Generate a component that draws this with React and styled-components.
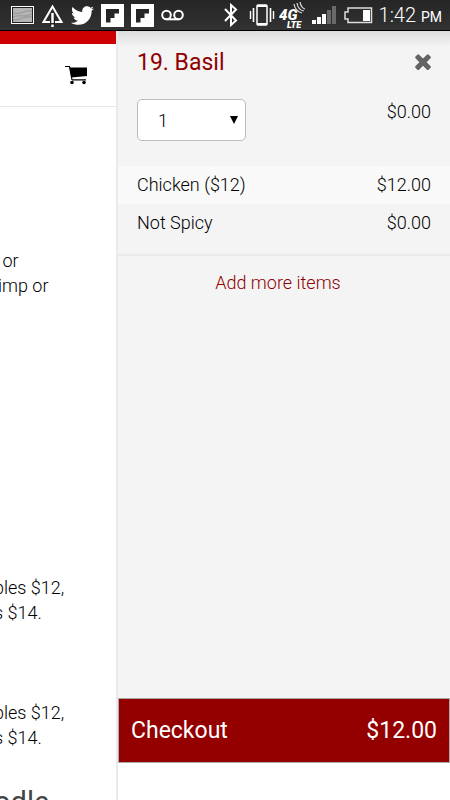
import React, { useState } from 'react'
import styled, { createGlobalStyle } from 'styled-components'
import { FaTwitter } from 'react-icons/fa'

const GlobalStyle = createGlobalStyle`
    * {
        box-sizing: border-box;
    }

    body {
        margin: 0;
        background: #fff;
        color: #000;
        font-family: Roboto, 'Liberation Sans', sans-serif;
        font-size: 18px;
        font-weight: 300;
        line-height: 25px;
    }

    svg {
        display: block;
        flex: none;
    }
`

const Screen = styled.div`
    display: flex;
    flex-direction: column;
    height: 100vh;
    overflow: hidden;
`

const StatusBar = styled.header`
    display: flex;
    flex: none;
    justify-content: space-between;
    align-items: center;
    height: 31px;
    padding: 0 8px 0 11px;
    background: linear-gradient(#262626, #323232);
    border-bottom: 1px solid #000;
    color: #fff;
`

const StatusGroup = styled.div`
    display: flex;
    align-items: center;
    gap: ${(props) => props.$gap}px;
`

const Clock = styled.time`
    padding-top: 3px;
    font-size: 20px;
    white-space: nowrap;
`

const Meridiem = styled.span`
    font-size: 14px;
    font-weight: 400;
`

const Body = styled.div`
    display: flex;
    flex: 1;
    min-height: 0;
`

const Menu = styled.main`
    flex: none;
    width: 26%;
    border-top: 13px solid #cc0000;
    overflow: hidden;
`

const MenuHeader = styled.div`
    display: flex;
    justify-content: flex-end;
    align-items: center;
    height: 63px;
    padding-right: 29px;
    border-bottom: 1px solid #e6e6e6;
`

const CartButton = styled.button`
    padding: 0;
    border: 0;
    background: none;
    color: #000;
    cursor: pointer;
`

const Description = styled.p`
    margin: ${(props) => props.$space}px 0 0 -${(props) => props.$cut}px;
    white-space: pre;
`

const MenuTitle = styled.h2`
    margin: 34px 0 0 -6px;
    color: #444;
    font-size: 29px;
    font-weight: 400;
    line-height: 36px;
`

const Drawer = styled.aside`
    display: flex;
    flex: 1;
    flex-direction: column;
    min-width: 0;
    margin-left: -1px;
    border-left: 2px solid #eaeaea;
    background: linear-gradient(#dcdcdc, #f4f4f4 16px);
`

const DrawerHeader = styled.div`
    display: flex;
    justify-content: space-between;
    align-items: center;
    height: 62px;
    padding: 0 19px;
`

const ItemTitle = styled.h1`
    margin: 0;
    color: #900000;
    font-size: 23px;
    font-weight: 400;
`

const CloseButton = styled.button`
    padding: 0;
    border: 0;
    background: none;
    color: #636363;
    cursor: pointer;
`

const QuantityRow = styled.div`
    display: flex;
    justify-content: space-between;
    align-items: flex-start;
    height: 73px;
    padding: 6px 19px 0;
`

const SelectBox = styled.div`
    position: relative;
    width: 109px;

    svg {
        position: absolute;
        top: 17px;
        right: 8px;
        pointer-events: none;
    }
`

const Select = styled.select`
    width: 100%;
    height: 42px;
    padding: 0 20px;
    border: 1px solid #bbb;
    border-radius: 5px;
    background: #fff;
    color: #000;
    font: inherit;
    appearance: none;
`

const Options = styled.table`
    width: 100%;
    border-collapse: collapse;

    tr:first-child {
        background: #f9f9f9;
    }

    th,
    td {
        height: 38px;
        padding: 0 19px 2px;
        font-weight: 300;
        text-align: left;
    }

    td {
        text-align: right;
    }
`

const AddMore = styled.div`
    margin-top: 12px;
    padding: 14px 12px 0 0;
    border-top: 2px solid #eaeaea;
    text-align: center;

    a {
        color: #900000;
        text-decoration: none;
    }
`

const Footer = styled.footer`
    margin-top: auto;
    padding-bottom: 37px;
    background: #fff;
`

const CheckoutButton = styled.button`
    display: flex;
    justify-content: space-between;
    align-items: center;
    width: 100%;
    height: 65px;
    padding: 0 12px;
    border: 1px solid #aaa;
    background: #940000;
    color: #fff;
    font: inherit;
    font-size: 23px;
    font-weight: 400;
    cursor: pointer;
`

const PictureIcon = () => (
    <svg width="23" height="23" viewBox="0 0 23 23">
        <rect x="0.5" y="2.5" width="22" height="17" fill="#222" stroke="#fff" />
        <rect x="2" y="4" width="19" height="14" fill="#b4b4b4" />
        <path d="M2 9C8 11 14 6 21 7M2 13c7-3 12 1 19-3M2 16c7 0 12-4 19-3" fill="none" stroke="#888" strokeWidth="0.7" />
    </svg>
)

const AlertIcon = () => (
    <svg width="23" height="25" viewBox="0 0 23 25">
        <path d="M11.5 3.5L20.5 19H2.5z" fill="none" stroke="#fff" strokeWidth="2" />
        <path d="M11.5 11v12" stroke="#222" strokeWidth="5" />
        <path d="M11.5 10v10M11.5 21.5v2.5" stroke="#fff" strokeWidth="2.5" />
    </svg>
)

const FlipboardIcon = () => (
    <svg width="23" height="23" viewBox="0 0 23 23">
        <path d="M0 0h23v23H0z" fill="#fff" />
        <path d="M5 5h13v4.5h-4.5v4.5H9.5v4.5H5z" fill="#262626" />
    </svg>
)

const VoicemailIcon = () => (
    <svg width="23" height="12" viewBox="0 0 23 12" fill="none" stroke="#fff" strokeWidth="2">
        <circle cx="5.5" cy="6" r="4.3" />
        <circle cx="17.5" cy="6" r="4.3" />
        <path d="M5.5 10.300h12" />
    </svg>
)

const BluetoothIcon = () => (
    <svg width="21" height="24" viewBox="0 0 21 24">
        <path d="M1 6l11 11.500L7 22V2l5 4.500L1 18" fill="none" stroke="#fff" strokeWidth="2" />
    </svg>
)

const VibrateIcon = () => (
    <svg width="26" height="24" viewBox="0 0 26 24" fill="none" stroke="#fff">
        <rect x="8" y="2" width="10" height="20" rx="1" strokeWidth="1.5" />
        <path d="M8 3h10M8 21h10" strokeWidth="2" />
        <path d="M4.5 5v14M21.5 5v14" strokeWidth="1.6" />
        <path d="M1.5 8v8M24.5 8v8" strokeWidth="1.4" />
    </svg>
)

const LteIcon = () => (
    <svg width="29" height="27" viewBox="0 0 29 27" fill="#fff" fontFamily="Roboto, sans-serif" fontStyle="italic" fontWeight="900">
        <text x="0" y="18" fontSize="15">4G</text>
        <text x="8" y="26" fontSize="9">LTE</text>
        <path d="M15 2q1 7 8 9M18 1q1 7 7 8M21 0q1 6 5 7" fill="none" stroke="#ddd" strokeWidth="1.2" />
    </svg>
)

const SignalIcon = () => (
    <svg width="28" height="20" viewBox="0 0 28 20" fill="#fff">
        <path d="M0 15h4v4H0zM5 12h4v7H5zM10 9h4v10h-4z" />
        <path d="M15 5h4v14h-4zM20 1h4v18h-4z" fill="#6a6a6a" />
    </svg>
)

const BatteryIcon = () => (
    <svg width="31" height="17" viewBox="0 0 31 17">
        <path d="M4 1h23.5v14.5H4V12H1V5h3z" fill="none" stroke="#ddd" strokeWidth="1.5" />
        <path d="M19 3h7v11h-7z" fill="#fff" />
    </svg>
)

const CartIcon = () => (
    <svg width="23" height="20" viewBox="0 0 23 20">
        <path d="M4.5 2.5H22V11L6.5 12.5z" />
        <path d="M0 1.500h4.500L7 15M7 14.800h14" fill="none" stroke="currentColor" strokeWidth="1.2" />
        <circle cx="7" cy="17.5" r="1.8" />
        <circle cx="19" cy="17.5" r="1.8" />
    </svg>
)

const CloseIcon = () => (
    <svg width="16" height="16" viewBox="302 346 1188 1208" fill="currentColor">
        <path d="M1490 1322q0 40-28 68l-136 136q-28 28-68 28t-68-28l-294-294-294 294q-28 28-68 28t-68-28l-136-136q-28-28-28-68t28-68l294-294-294-294q-28-28-28-68t28-68l136-136q28-28 68-28t68 28l294 294 294-294q28-28 68-28t68 28l136 136q28 28 28 68t-28 68l-294 294 294 294q28 28 28 68z" />
    </svg>
)

const options = [
    { name: 'Chicken ($12)', price: '$12.00' },
    { name: 'Not Spicy', price: '$0.00' },
]

function App() {
    const [quantity, setQuantity] = useState('1')

    return (
        <Screen>
            <GlobalStyle />
            <StatusBar>
                <StatusGroup $gap={7}>
                    <PictureIcon />
                    <AlertIcon />
                    <FaTwitter size={23} />
                    <FlipboardIcon />
                    <FlipboardIcon />
                    <VoicemailIcon />
                </StatusGroup>
                <StatusGroup $gap={4}>
                    <BluetoothIcon />
                    <VibrateIcon />
                    <LteIcon />
                    <SignalIcon />
                    <BatteryIcon />
                    <Clock>
                        1:42 <Meridiem>PM</Meridiem>
                    </Clock>
                </StatusGroup>
            </StatusBar>

            <Body>
                <Menu>
                    <MenuHeader>
                        <CartButton aria-label="Cart">
                            <CartIcon />
                        </CartButton>
                    </MenuHeader>
                    <Description $space={141} $cut={2}>{' or\nimp or'}</Description>
                    <Description $space={277} $cut={6}>{'bles $12,\ns $14.'}</Description>
                    <Description $space={75} $cut={6}>{'bles $12,\ns $14.'}</Description>
                    <MenuTitle>odle</MenuTitle>
                </Menu>

                <Drawer>
                    <DrawerHeader>
                        <ItemTitle>19. Basil</ItemTitle>
                        <CloseButton aria-label="Remove item">
                            <CloseIcon />
                        </CloseButton>
                    </DrawerHeader>
                    <QuantityRow>
                        <SelectBox>
                            <Select
                                aria-label="Quantity"
                                value={quantity}
                                onChange={(e) => setQuantity(e.target.value)}
                            >
                                <option>1</option>
                                <option>2</option>
                                <option>3</option>
                            </Select>
                            <svg width="8" height="8" viewBox="0 0 8 8">
                                <path d="M0 0h8L4 8z" />
                            </svg>
                        </SelectBox>
                        <span>$0.00</span>
                    </QuantityRow>
                    <Options>
                        <tbody>
                            {
                                options.map((item) => (
                                    <tr key={item.name}>
                                        <th scope="row">{item.name}</th>
                                        <td>{item.price}</td>
                                    </tr>
                                ))
                            }
                        </tbody>
                    </Options>
                    <AddMore>
                        <a href="#menu">Add more items</a>
                    </AddMore>
                    <Footer>
                        <CheckoutButton>
                            <span>Checkout</span>
                            <span>$12.00</span>
                        </CheckoutButton>
                    </Footer>
                </Drawer>
            </Body>
        </Screen>
    )
}

export default App
